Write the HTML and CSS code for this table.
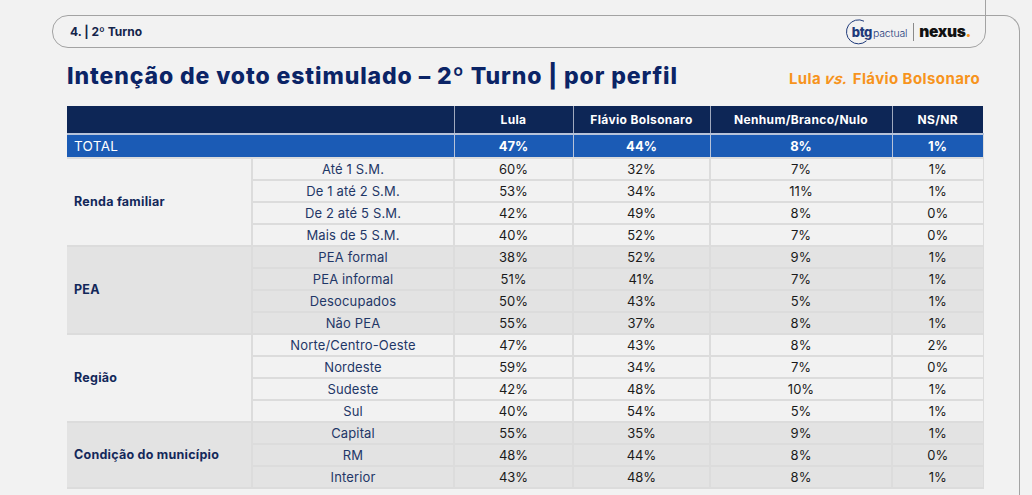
FILE: index.html
```html
<!DOCTYPE html>
<html lang="pt-BR">
<head>
<meta charset="utf-8">
<title>Intenção de voto estimulado – 2º Turno</title>
<link rel="stylesheet" href="styles.css">
</head>
<body>
<div class="frame">
  <header class="pill">
    <span class="pill-title">4. | 2º Turno</span>
    <div class="logo">
      <span class="btg">
        <svg class="btg-ring" width="28" height="28" viewBox="0 0 28 28"><path d="M19 3.2 A12 12 0 1 0 21.5 22.8" fill="none" stroke="#1f3a7a" stroke-width="1"/></svg>
        <b>btg</b><span class="pactual">pactual</span>
      </span>
      <span class="divider"></span>
      <span class="nexus">nexus<span class="dot">.</span></span>
    </div>
  </header>
  <div class="content">
    <div class="title-row">
      <h1>Intenção de voto estimulado – 2º Turno | por perfil</h1>
      <p class="subtitle">Lula <i>vs.</i> Flávio Bolsonaro</p>
    </div>
    <table class="grid">
      <colgroup>
        <col class="c1"><col class="c2"><col class="c3"><col class="c4"><col class="c5"><col class="c6">
      </colgroup>
      <thead>
        <tr class="head">
          <th colspan="2"></th><th>Lula</th><th>Flávio Bolsonaro</th><th>Nenhum/Branco/Nulo</th><th>NS/NR</th>
        </tr>
        <tr class="total">
          <td colspan="2" class="total-label">TOTAL</td><td>47%</td><td>44%</td><td>8%</td><td>1%</td>
        </tr>
      </thead>
      <tbody class="g-light">
        <tr><th rowspan="4" class="group">Renda familiar</th><td class="sub">Até 1 S.M.</td><td>60%</td><td>32%</td><td>7%</td><td>1%</td></tr>
        <tr><td class="sub">De 1 até 2 S.M.</td><td>53%</td><td>34%</td><td>11%</td><td>1%</td></tr>
        <tr><td class="sub">De 2 até 5 S.M.</td><td>42%</td><td>49%</td><td>8%</td><td>0%</td></tr>
        <tr><td class="sub">Mais de 5 S.M.</td><td>40%</td><td>52%</td><td>7%</td><td>0%</td></tr>
      </tbody>
      <tbody class="g-dark">
        <tr><th rowspan="4" class="group">PEA</th><td class="sub">PEA formal</td><td>38%</td><td>52%</td><td>9%</td><td>1%</td></tr>
        <tr><td class="sub">PEA informal</td><td>51%</td><td>41%</td><td>7%</td><td>1%</td></tr>
        <tr><td class="sub">Desocupados</td><td>50%</td><td>43%</td><td>5%</td><td>1%</td></tr>
        <tr><td class="sub">Não PEA</td><td>55%</td><td>37%</td><td>8%</td><td>1%</td></tr>
      </tbody>
      <tbody class="g-light">
        <tr><th rowspan="4" class="group">Região</th><td class="sub">Norte/Centro-Oeste</td><td>47%</td><td>43%</td><td>8%</td><td>2%</td></tr>
        <tr><td class="sub">Nordeste</td><td>59%</td><td>34%</td><td>7%</td><td>0%</td></tr>
        <tr><td class="sub">Sudeste</td><td>42%</td><td>48%</td><td>10%</td><td>1%</td></tr>
        <tr><td class="sub">Sul</td><td>40%</td><td>54%</td><td>5%</td><td>1%</td></tr>
      </tbody>
      <tbody class="g-dark">
        <tr><th rowspan="3" class="group">Condição do município</th><td class="sub">Capital</td><td>55%</td><td>35%</td><td>9%</td><td>1%</td></tr>
        <tr><td class="sub">RM</td><td>48%</td><td>44%</td><td>8%</td><td>0%</td></tr>
        <tr><td class="sub">Interior</td><td>43%</td><td>48%</td><td>8%</td><td>1%</td></tr>
      </tbody>
    </table>
  </div>
</div>
</body>
</html>
```

FILE: styles.css
```css
* { box-sizing: border-box; }
html, body { margin: 0; padding: 0; }
body {
  background: #f2f2f2;
  font-family: Inter, "Noto Sans", "Liberation Sans", sans-serif;
  color: #1a1a1a;
  width: 1032px;
  height: 495px;
  overflow: hidden;
}

.frame {
  margin: 15px 12px 0 68px;
  height: 480px;
  border-top: 1px solid #a3a3a3;
  border-right: 1px solid #a3a3a3;
  border-top-right-radius: 16px;
}

.pill {
  position: relative;
  margin: -1px 33px 0 -16px;
  height: 33px;
  border: 1px solid #a3a3a3;
  border-radius: 16px 0 16px 16px;
  display: flex;
  align-items: center;
  justify-content: space-between;
  padding: 0 14px 0 17px;
}
.pill::before {
  content: "";
  position: absolute;
  right: -1px;
  top: -16px;
  height: 16px;
  border-right: 1px solid #a3a3a3;
}
.pill-title {
  font-size: 12px;
  font-weight: 700;
  color: #14244a;
  letter-spacing: 0;
}

.logo {
  display: flex;
  align-items: center;
  height: 28px;
}
.btg {
  position: relative;
  display: flex;
  align-items: baseline;
  padding-left: 8px;
  color: #1f3a7a;
}
.btg-ring {
  position: absolute;
  left: 1px;
  top: -6px;
}
.btg b {
  font-size: 13px;
  font-weight: 800;
  letter-spacing: -0.4px;
}
.pactual {
  font-size: 10.5px;
  font-weight: 300;
  letter-spacing: -0.2px;
  margin-left: 1px;
}
.divider {
  width: 1px;
  height: 18px;
  background: #8a8a8a;
  margin: 0 5px 0 6px;
}
.nexus {
  font-size: 15.5px;
  font-weight: 900;
  color: #111;
  letter-spacing: -0.3px;
}
.dot { color: #f7941d; }

.content {
  margin-left: -1px;
  width: 916px;
}

.title-row {
  display: flex;
  justify-content: space-between;
  align-items: baseline;
  margin-top: 14px;
  height: 29px;
}
h1 {
  margin: 0;
  font-size: 23px;
  line-height: 28px;
  font-weight: 800;
  color: #0b2466;
  letter-spacing: 0.9px;
}
.subtitle {
  margin: 0 3px 0 0;
  font-size: 15px;
  font-weight: 700;
  color: #f7941d;
  letter-spacing: 0.4px;
}
.subtitle i {
  display: inline-block;
  font-style: italic;
  transform: skewX(-12deg);
}

.grid {
  margin-top: 15px;
  width: 916px;
  border-collapse: collapse;
  table-layout: fixed;
  font-size: 13px;
}
.c1 { width: 185px; }
.c2 { width: 202px; }
.c3 { width: 119px; }
.c4 { width: 137px; }
.c5 { width: 182px; }
.c6 { width: 91px; }

.grid td, .grid th {
  padding: 0;
  text-align: center;
  border: 2px solid #dcdcdc;
  height: 22px;
  line-height: 18px;
}

.head th {
  background: #0d2656;
  color: #fff;
  font-size: 12px;
  font-weight: 700;
  letter-spacing: 0.35px;
  height: 28px;
  border: 1px solid #9fa9bd;
  border-top: none;
}
.head th:first-child { border-left: none; }
.head th:last-child { border-right: none; }

.total td {
  background: #1b5bb5;
  color: #fff;
  font-weight: 700;
  font-size: 13px;
  height: 24px;
  border: 1px solid #b7c3d9;
  border-top: 2px solid #b7c3d9;
}
.total td:first-child { border-left: none; }
.total td:last-child { border-right: none; }
.total .total-label {
  text-align: left;
  padding-left: 7px;
  font-weight: 400;
  font-size: 13.5px;
  letter-spacing: 0.3px;
}

.g-light td, .g-light th { background: #f2f2f2; }
.g-dark td, .g-dark th { background: #e3e3e3; }

.grid .group {
  text-align: left;
  padding-left: 7px;
  font-weight: 700;
  color: #13285a;
  font-size: 12.5px;
  letter-spacing: 0.25px;
  border-left: none;
}
.grid .sub { color: #1f3767; letter-spacing: 0.15px; }
.grid tr td:last-child { border-right: 1px solid #dcdcdc; }
```
